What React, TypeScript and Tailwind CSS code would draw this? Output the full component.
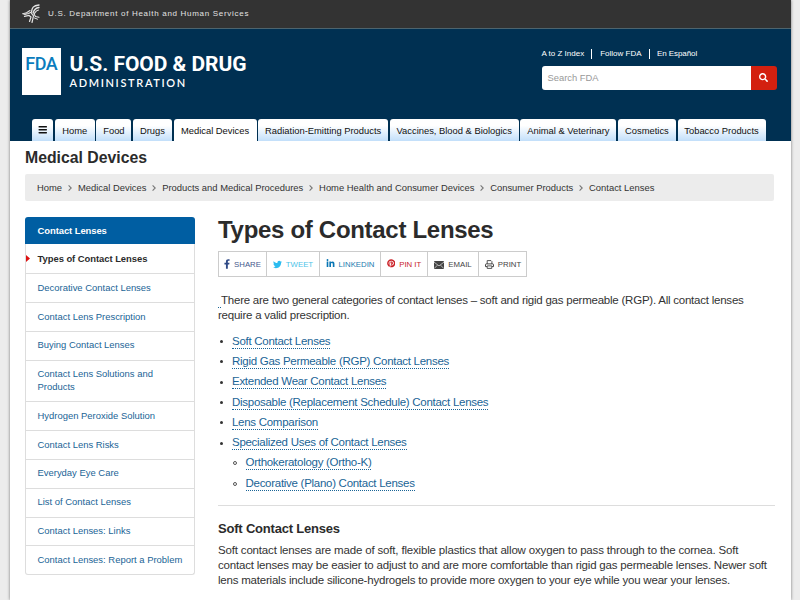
import React from "react";
import { FaBars, FaFacebookF, FaLinkedinIn, FaPinterest, FaSearch, FaTwitter } from "react-icons/fa";

const tabs = [
	{ label: "Home", width: "w-[40px]" },
	{ label: "Food", width: "w-[35px]" },
	{ label: "Drugs", width: "w-[39px]" },
	{ label: "Medical Devices", width: "w-[83px]", active: true },
	{ label: "Radiation-Emitting Products", width: "w-[130px]" },
	{ label: "Vaccines, Blood & Biologics", width: "w-[129px]" },
	{ label: "Animal & Veterinary", width: "w-[96px]" },
	{ label: "Cosmetics", width: "w-[58px]" },
	{ label: "Tobacco Products", width: "w-[88px]" },
];

const crumbs = ["Home", "Medical Devices", "Products and Medical Procedures", "Home Health and Consumer Devices", "Consumer Products", "Contact Lenses"];

const sideLinks = [
	"Decorative Contact Lenses",
	"Contact Lens Prescription",
	"Buying Contact Lenses",
	"Contact Lens Solutions and Products",
	"Hydrogen Peroxide Solution",
	"Contact Lens Risks",
	"Everyday Eye Care",
	"List of Contact Lenses",
	"Contact Lenses: Links",
	"Contact Lenses: Report a Problem",
];

const topics = [
	{ label: "Soft Contact Lenses" },
	{ label: "Rigid Gas Permeable (RGP) Contact Lenses" },
	{ label: "Extended Wear Contact Lenses" },
	{ label: "Disposable (Replacement Schedule) Contact Lenses" },
	{ label: "Lens Comparison" },
	{ label: "Specialized Uses of Contact Lenses" },
	{ label: "Orthokeratology (Ortho-K)", nested: true },
	{ label: "Decorative (Plano) Contact Lenses", nested: true },
];

function HhsLogo() {
	return (
		<svg className="h-[20px] w-[19px]" viewBox="0 0 19 20" fill="none" stroke="#e4e4e4" strokeLinecap="round">
			<path d="M17 1C11 1.5 10 4 9.5 8" strokeWidth="1.3" />
			<path d="M17 3.5C13 4 12 6 11 9" strokeWidth="1.3" />
			<path d="M16.5 6C14 6.5 13.5 8 12 10" strokeWidth="1.2" />
			<path d="M9.5 8L6.5 9.5L3 10.5L1 9.8L4.5 8.7L8 6.5" strokeWidth="1.1" />
			<path d="M2.5 12.3L7 11.5L9 13L7.5 17.5" strokeWidth="1.2" />
			<path d="M9.5 9.5L11.5 12L10 18.5" strokeWidth="1.2" />
			<path d="M12 10L13.5 12.5L17 13.3" strokeWidth="1.1" />
			<path d="M12.5 14L15.5 15.2" strokeWidth="1" />
		</svg>
	);
}

function EnvelopeIcon() {
	return (
		<svg className="h-[8px] w-[10px]" viewBox="0 0 10 8">
			<rect width="10" height="8" rx="0.8" fill="#444" />
			<path d="M0 1.1L5 4.9L10 1.1M0.4 7.3L3.4 4.2M9.6 7.3L6.6 4.2" fill="none" stroke="#fff" strokeWidth="0.6" />
		</svg>
	);
}

function PrintIcon() {
	return (
		<svg className="h-[9px] w-[9px]" viewBox="0 0 9 9" fill="none" stroke="#444">
			<path d="M2.2 4V0.6H6L6.9 1.5V4" strokeWidth="0.9" />
			<path d="M2 6.6H0.5V4.6Q0.5 3.9 1.2 3.9H7.8Q8.5 3.9 8.5 4.6V6.6H7" strokeWidth="1" />
			<path d="M2.2 5.9H6.8V8.4H2.2Z" strokeWidth="0.9" />
		</svg>
	);
}

const shares = [
	{ label: "SHARE", box: "w-[47px] text-[#45598c]", icon: <FaFacebookF className="mb-[1px] h-[10px] w-[6px] text-[#2f4a86]" /> },
	{ label: "TWEET", box: "w-[53px] text-[#4cc3e8]", icon: <FaTwitter className="mb-[1px] size-[9px] text-[#2bbcf0]" /> },
	{ label: "LINKEDIN", box: "w-[61px] text-[#1b7aae]", icon: <FaLinkedinIn className="mb-[2px] size-[9px] text-[#0976b4]" /> },
	{ label: "PIN IT", box: "w-[47px] text-[#c8232c]", icon: <FaPinterest className="mb-[2px] size-[8.5px] text-[#cb2027]" /> },
	{ label: "EMAIL", box: "w-[51px] text-[#444]", icon: <EnvelopeIcon /> },
	{ label: "PRINT", box: "w-[49px] text-[#444]", icon: <PrintIcon /> },
];

function Header() {
	return (
		<header>
			<div className="flex h-[29px] items-center border-b border-[#4d646e] bg-[#333] pl-[12.5px]">
				<HhsLogo />
				<span className="ml-[7px] text-[8px] tracking-[0.7px] whitespace-nowrap text-[#e2e2e2]">U.S. Department of Health and Human Services</span>
			</div>
			<div className="flex h-[112px] flex-col justify-between bg-[#003052]">
				<div className="flex justify-between pr-[14px] pl-[12px]">
					<div className="flex pt-[19px]">
						<div className="flex h-[47px] w-[39.5px] justify-center bg-white pt-[5px]">
							<span className="font-[Roboto] text-[18px] leading-[21px] font-medium tracking-[-0.4px] text-[#0a7cbd]">FDA</span>
						</div>
						<div className="ml-[8.5px] font-[Roboto] whitespace-nowrap text-white">
							<div className="mt-[3.5px] text-[21px] leading-[24px] font-bold tracking-[-0.05px]">U.S. FOOD &amp; DRUG</div>
							<div className="mt-[1px] font-[Lato] text-[11px] leading-[12px] font-semibold tracking-[1.65px]">ADMINISTRATION</div>
						</div>
					</div>
					<div className="w-[235px] pt-[19px]">
						<div className="flex h-[11px] items-center text-[8px] whitespace-nowrap text-white">
							<span>A to Z Index</span>
							<span className="mr-[8px] ml-[7px] h-[10px] w-px bg-white" />
							<span>Follow FDA</span>
							<span className="mr-[7.5px] ml-[7px] h-[10px] w-px bg-white" />
							<span className="tracking-[-0.08px]">En Español</span>
						</div>
						<div className="mt-[7px] flex h-[24px] overflow-hidden rounded-[3px]">
							<div className="flex flex-1 items-center bg-white pt-[1px] pl-[6px] text-[9.4px] text-[#999]">Search FDA</div>
							<button className="flex w-[26px] items-center justify-center bg-[#d3200f] pb-[2px]">
								<FaSearch className="size-[9px] text-white" />
							</button>
						</div>
					</div>
				</div>
				<nav className="flex gap-[1.6px] pl-[22px] text-[9.4px] text-[#111]">
					<div className="flex h-[22px] w-[21.7px] items-center justify-center rounded-t-[3px] bg-linear-to-b from-white from-30% to-[#c2dffa]">
						<FaBars className="size-[9.5px]" />
					</div>
					{tabs.map((tab) => (
						<div key={tab.label} className={`flex h-[22px] shrink-0 items-center justify-center rounded-t-[3px] pt-[1.5px] whitespace-nowrap ${tab.width} ${tab.active ? "bg-white" : "bg-linear-to-b from-white from-30% to-[#c2dffa]"}`}>
							{tab.label}
						</div>
					))}
				</nav>
			</div>
		</header>
	);
}

function Sidebar() {
	return (
		<aside className="w-[170px] shrink-0 text-[9.45px] leading-[12.5px]">
			<div className="flex h-[27px] items-center rounded-t-[3px] bg-[#005ea2] pt-[1px] pl-[12.5px] font-bold tracking-[-0.07px] text-white">Contact Lenses</div>
			<div className="rounded-b-[3px] border border-t-0 border-[#ddd]">
				<div className="flex h-[29px] items-center">
					<svg className="h-[7px] w-[4px]" viewBox="0 0 4 7">
						<path d="M0 0L4 3.5L0 7Z" fill="#d11" />
					</svg>
					<span className="ml-[7.5px] pt-[1px] font-bold tracking-[-0.05px] text-[#2b2b2b]">Types of Contact Lenses</span>
				</div>
				{sideLinks.map((link) => (
					<div key={link} className="border-t border-[#ddd] pt-[7.7px] pr-[4px] pb-[7.7px] pl-[11.5px] leading-[12.5px] text-[#1a6496]">
						<div className="max-w-[147px]">{link}</div>
					</div>
				))}
			</div>
		</aside>
	);
}

function ShareBar() {
	return (
		<div className="flex h-[26px] w-[309px] border border-[#ccc]">
			{shares.map((share) => (
				<div key={share.label} className={`flex shrink-0 grow items-center justify-center gap-[4px] border-l border-[#ccc] pt-[1px] text-[7.8px] whitespace-nowrap first:border-l-0 ${share.box}`}>
					{share.icon}
					<span>{share.label}</span>
				</div>
			))}
		</div>
	);
}

function Article() {
	return (
		<main className="ml-[23px] w-[557px] text-[11.5px] leading-[15px] text-[#333]">
			<h1 className="text-[24px] leading-[26px] font-bold tracking-[-0.3px] text-[#2b2b2b]">Types of Contact Lenses</h1>
			<div className="mt-[8px]">
				<ShareBar />
			</div>
			<p className="mt-[16px] tracking-[-0.23px] whitespace-nowrap">
				<span className="inline-block h-[13px] w-[3px] border-b border-dotted border-[#1a6496] align-bottom" />
				There are two general categories of contact lenses – soft and rigid gas permeable (RGP). All contact lenses
				<br />
				require a valid prescription.
			</p>
			<ul className="mt-[8.5px] tracking-[-0.28px]">
				{topics.map((topic) => (
					<li key={topic.label} className={`flex h-[20.3px] items-center ${topic.nested ? "pl-[15px]" : "pl-[2px]"}`}>
						<span className={topic.nested ? "size-[4px] rounded-full border border-[#555]" : "size-[3px] rounded-full bg-[#333]"} />
						<a className={`border-b border-dotted border-[#1a6496] leading-[13px] whitespace-nowrap text-[#1a6496] ${topic.nested ? "ml-[8.5px]" : "ml-[9px]"}`}>{topic.label}</a>
					</li>
				))}
			</ul>
			<hr className="mt-[11.5px] border-[#ddd]" />
			<h3 className="mt-[15px] text-[13px] leading-[16px] font-bold tracking-[-0.2px] text-[#2b2b2b]">Soft Contact Lenses</h3>
			<p className="mt-[6px] tracking-[-0.19px] whitespace-nowrap">
				<span className="tracking-[-0.17px]">Soft contact lenses are made of soft, flexible plastics that allow oxygen to pass through to the cornea. Soft</span>
				<br />
				<span className="tracking-[-0.2px]">contact lenses may be easier to adjust to and are more comfortable than rigid gas permeable lenses. Newer soft</span>
				<br />
				<span className="tracking-[-0.21px]">lens materials include silicone-hydrogels to provide more oxygen to your eye while you wear your lenses.</span>
			</p>
		</main>
	);
}

export default function App() {
	return (
		<div className="h-[600px] w-[800px] overflow-hidden bg-[#ececec] px-[9.5px] font-['Liberation_Sans',Arial,sans-serif]">
			<div className="h-full bg-white shadow-[0_0_3px_#777]">
				<Header />
				<div className="pl-[15.5px]">
					<h2 className="mt-[8px] text-[15.8px] leading-[18px] font-bold text-[#2b2b2b]">Medical Devices</h2>
					<div className="mt-[7px] flex h-[27px] w-[749px] items-center rounded-[2px] bg-[#ececec] pt-[1px] pl-[12px] text-[9.42px] whitespace-nowrap text-[#333]">
						{crumbs.map((crumb, index) => (
							<React.Fragment key={crumb}>
								{index > 0 && (
									<svg className="mx-[5.9px] h-[6px] w-[4px]" viewBox="0 0 4 6">
										<path d="M0.6 0.4L3.2 3L0.6 5.6" fill="none" stroke="#777" strokeWidth="1.1" />
									</svg>
								)}
								<span>{crumb}</span>
							</React.Fragment>
						))}
					</div>
					<div className="mt-[16px] flex">
						<Sidebar />
						<Article />
					</div>
				</div>
			</div>
		</div>
	);
}
